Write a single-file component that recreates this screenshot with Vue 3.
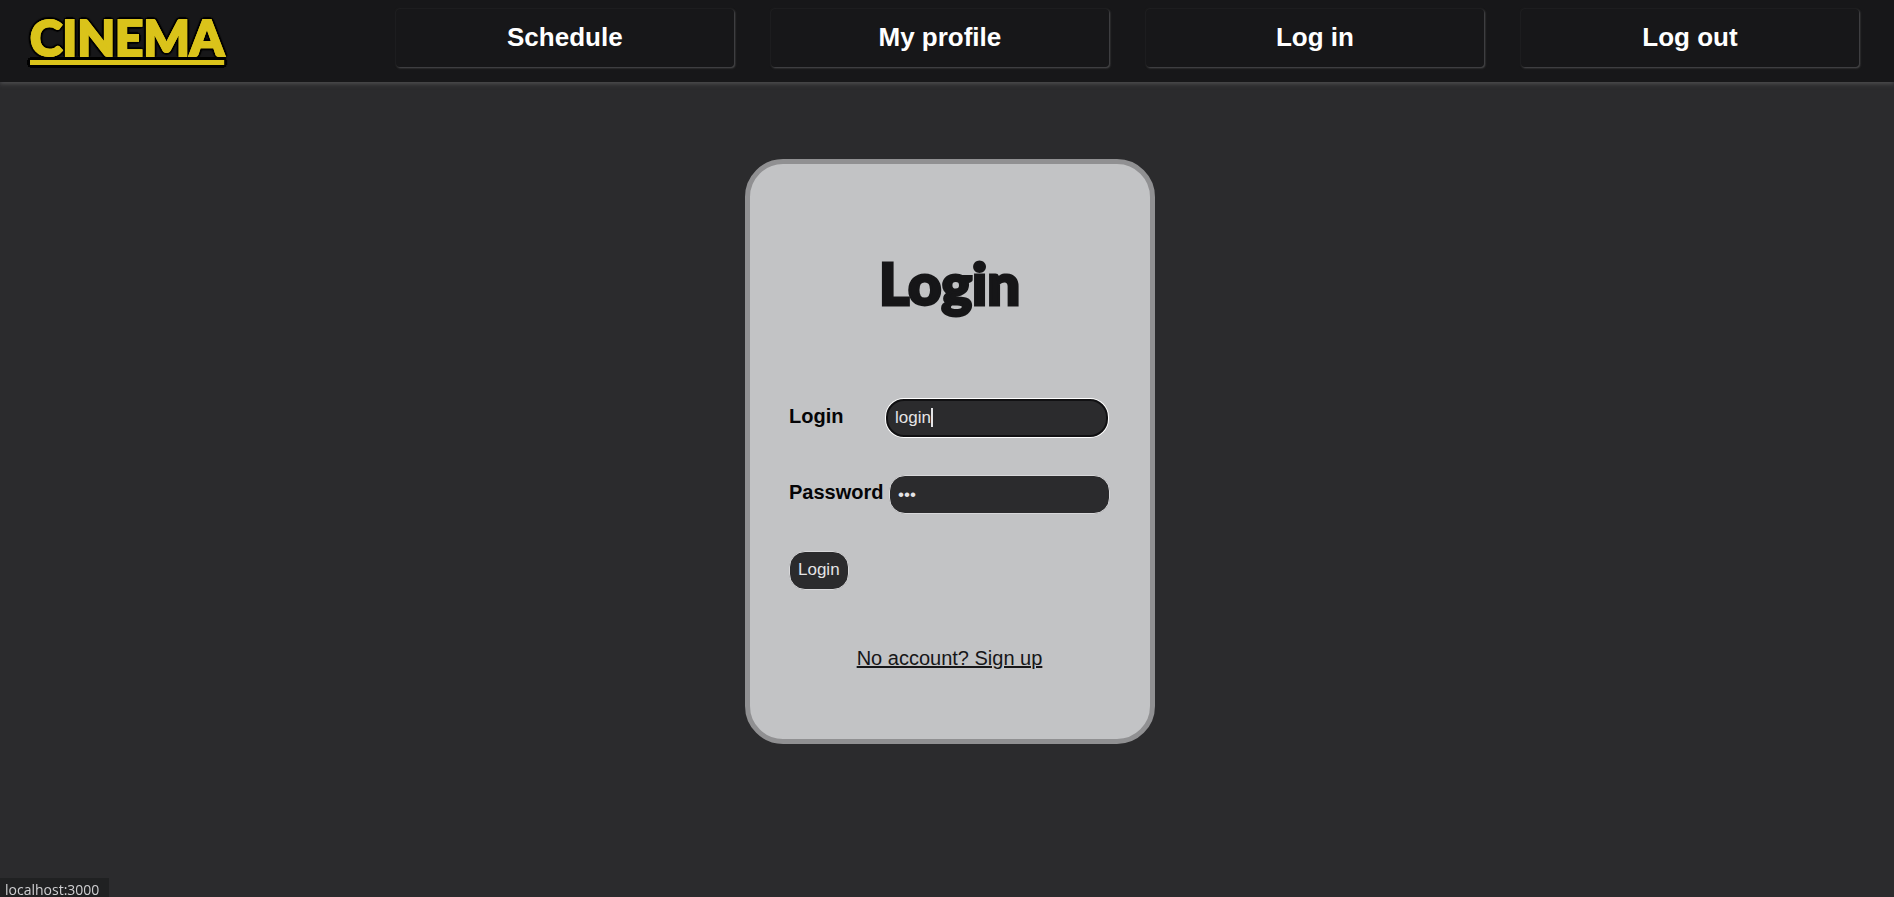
<script setup>
import { ref } from 'vue'

const links = ['Schedule', 'My profile', 'Log in', 'Log out']
const login = ref('login')
const password = ref('123')
</script>

<template>
  <div class="page">
    <header class="header">
      <a class="logo" href="#">CINEMA</a>
      <nav class="nav">
        <a v-for="link in links" :key="link" class="nav-link" href="#">{{ link }}</a>
      </nav>
    </header>

    <main class="main">
      <form class="card" @submit.prevent>
        <h1 class="title">Login</h1>
        <div class="row">
          <label class="label" for="login">Login</label>
          <div class="field active">
            <input id="login" v-model="login" class="input" type="text" autocomplete="off" />
            <span class="caret"></span>
          </div>
        </div>
        <div class="row">
          <label class="label" for="password">Password</label>
          <div class="field">
            <input id="password" v-model="password" class="input" type="password" autocomplete="off" />
          </div>
        </div>
        <button class="submit" type="submit">Login</button>
        <a class="signup" href="#">No account? Sign up</a>
      </form>
    </main>

    <div class="status">localhost:3000</div>
  </div>
</template>

<style>
body {
  margin: 0;
  background: #2b2b2d;
}
</style>

<style scoped>
.page {
  display: flex;
  flex-direction: column;
  min-height: 100vh;
  font-family: "Liberation Sans", Arial, sans-serif;
  background: #2b2b2d;
}

.header {
  display: flex;
  align-items: flex-start;
  justify-content: space-between;
  box-sizing: border-box;
  height: 82px;
  padding: 9px 35px 0 30px;
  background: #171719;
  box-shadow: 0 2px 4px #4c4c4e;
}

.logo {
  color: #dac31a;
  font-family: Lato, sans-serif;
  font-size: 49px;
  font-weight: 900;
  line-height: 56px;
  text-decoration: underline;
  text-decoration-thickness: 5px;
  text-underline-offset: 4px;
  text-decoration-skip-ink: none;
  -webkit-text-stroke: 2px #dac31a;
  text-shadow:
    3px 0 1px #000, -3px 0 1px #000, 0 3px 1px #000, 0 -3px 1px #000,
    2px 2px 1px #000, -2px 2px 1px #000, 2px -2px 1px #000, -2px -2px 1px #000;
}

.nav {
  display: flex;
  gap: 37px;
  width: 80%;
}

.nav-link {
  flex: 1;
  box-sizing: border-box;
  height: 58px;
  border-radius: 4px;
  background: #171719;
  color: #fff;
  font-size: 26px;
  font-weight: 700;
  line-height: 56px;
  text-align: center;
  text-decoration: none;
  box-shadow: 0 0 2px #2c2c2e, 1px 1px 2px #58585a;
}

.main {
  display: flex;
  justify-content: center;
  padding: 77px 0 40px 6px;
}

.card {
  display: flex;
  flex-direction: column;
  align-items: flex-start;
  box-sizing: border-box;
  width: 410px;
  padding: 82px 40px 69px 39px;
  border: 5px solid #909092;
  border-radius: 38px;
  background: #c2c3c5;
}

.title {
  align-self: center;
  margin: 0 0 79px;
  color: #161618;
  font-family: Lato, sans-serif;
  font-size: 58px;
  font-weight: 900;
  line-height: 74px;
  -webkit-text-stroke: 3px #161618;
}

.row {
  display: flex;
  justify-content: space-between;
  align-self: stretch;
  height: 39px;
  margin-bottom: 37px;
}

.label {
  color: #050507;
  font-size: 20px;
  font-weight: 700;
  line-height: 34px;
}

.field {
  position: relative;
  box-sizing: border-box;
  width: 221px;
  height: 39px;
}

.input {
  box-sizing: border-box;
  width: 100%;
  height: 39px;
  padding: 0 8px;
  border: 1px solid #d8d8da;
  border-radius: 16px;
  outline: none;
  background: #2b2b2d;
  color: #e4e4e6;
  font-family: inherit;
  font-size: 17px;
}

.active {
  width: 222px;
  margin-right: 2px;
}

.active .input {
  height: 38px;
  padding: 0 7px;
  border: 2px solid #111113;
  border-radius: 18px;
  box-shadow: 0 0 0 1px #fff;
  caret-color: transparent;
}

.caret {
  position: absolute;
  top: 9px;
  left: 45px;
  width: 2px;
  height: 19px;
  background: #e4e4e6;
}

.submit {
  height: 39px;
  padding: 0 8px 2px;
  border: 1px solid #d8d8da;
  border-radius: 16px;
  background: #2b2b2d;
  color: #e4e4e6;
  font-family: inherit;
  font-size: 17px;
}

.signup {
  align-self: center;
  margin-top: 56px;
  color: #161618;
  font-size: 20px;
  line-height: 24px;
  text-decoration: underline;
  text-decoration-thickness: 2px;
}

.status {
  position: fixed;
  bottom: 0;
  left: 0;
  height: 19px;
  padding: 0 10px 0 5px;
  background: #202122;
  color: #cfcfd1;
  font-family: "Open Sans", "Noto Sans", sans-serif;
  font-size: 14px;
  line-height: 24px;
}
</style>
